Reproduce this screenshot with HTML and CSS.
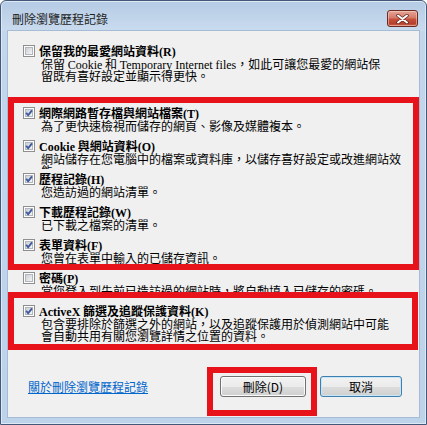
FILE: index.html
```html
<!DOCTYPE html>
<html lang="zh-Hant">
<head>
    <meta charset="UTF-8">
    <meta name="viewport" content="width=device-width, initial-scale=1.0">
    <title>刪除瀏覽歷程記錄</title>
    <link rel="stylesheet" href="styles.css">
</head>
<body>
    <!-- shared checkbox drawings -->
    <svg class="sprite" width="0" height="0" aria-hidden="true">
        <defs>
            <linearGradient id="boxFill" x1="0" y1="0" x2="1" y2="1">
                <stop offset="0" stop-color="#c9cdd3"/>
                <stop offset="1" stop-color="#f7f7f7"/>
            </linearGradient>
            <symbol id="boxOff" viewBox="0 0 12 12">
                <rect x="0.5" y="0.5" width="11" height="11" fill="#fdfdfd" stroke="#8f8f8f"/>
                <rect x="2.5" y="2.5" width="7" height="7" fill="url(#boxFill)" stroke="#b2b7bd"/>
            </symbol>
            <symbol id="boxOn" viewBox="0 0 12 12">
                <rect x="0.5" y="0.5" width="11" height="11" fill="#fdfdfd" stroke="#8f8f8f"/>
                <rect x="2.5" y="2.5" width="7" height="7" fill="url(#boxFill)" stroke="#b2b7bd"/>
                <path d="M3.2 5.8 L5.1 8.3 L9 3.3" fill="none" stroke="#3f5a9c" stroke-width="1.9"/>
            </symbol>
        </defs>
    </svg>

    <div class="window">
        <div class="titlebar">
            <span class="title">刪除瀏覽歷程記錄</span>
            <span class="close">
                <svg width="13" height="10" viewBox="0 0 13 10">
                    <path d="M2 1.5 L11 8.5 M11 1.5 L2 8.5" stroke="#5a2219" stroke-width="3.4" stroke-linecap="round"/>
                    <path d="M2 1.5 L11 8.5 M11 1.5 L2 8.5" stroke="#ffffff" stroke-width="2" stroke-linecap="round"/>
                </svg>
            </span>
        </div>

        <div class="client">
            <div class="item first">
                <svg class="box"><use href="#boxOff"/></svg>
                <div class="text">
                    <div class="label">保留我的最愛網站資料<span class="en">(R)</span></div>
                    <div class="desc">保留 <span class="en">Cookie</span> 和 <span class="en">Temporary Internet files</span>，如此可讓您最愛的網站保<br>留既有喜好設定並顯示得更快。</div>
                </div>
            </div>

            <div class="item row">
                <svg class="box"><use href="#boxOn"/></svg>
                <div class="text">
                    <div class="label">網際網路暫存檔與網站檔案<span class="en">(T)</span></div>
                    <div class="desc">為了更快速檢視而儲存的網頁、影像及媒體複本。</div>
                </div>
            </div>

            <div class="item row">
                <svg class="box"><use href="#boxOn"/></svg>
                <div class="text">
                    <div class="label"><span class="en">Cookie</span> 與網站資料<span class="en">(O)</span></div>
                    <div class="desc cut">網站儲存在您電腦中的檔案或資料庫，以儲存喜好設定或改進網站效<br>能。</div>
                </div>
            </div>

            <div class="item row">
                <svg class="box"><use href="#boxOn"/></svg>
                <div class="text">
                    <div class="label">歷程記錄<span class="en">(H)</span></div>
                    <div class="desc">您造訪過的網站清單。</div>
                </div>
            </div>

            <div class="item row">
                <svg class="box"><use href="#boxOn"/></svg>
                <div class="text">
                    <div class="label">下載歷程記錄<span class="en">(W)</span></div>
                    <div class="desc">已下載之檔案的清單。</div>
                </div>
            </div>

            <div class="item row">
                <svg class="box"><use href="#boxOn"/></svg>
                <div class="text">
                    <div class="label">表單資料<span class="en">(F)</span></div>
                    <div class="desc">您曾在表單中輸入的已儲存資訊。</div>
                </div>
            </div>

            <div class="item row">
                <svg class="box"><use href="#boxOff"/></svg>
                <div class="text">
                    <div class="label">密碼<span class="en">(P)</span></div>
                    <div class="desc">當您登入到先前已造訪過的網站時，將自動填入已儲存的密碼。</div>
                </div>
            </div>

            <div class="item last">
                <svg class="box"><use href="#boxOn"/></svg>
                <div class="text">
                    <div class="label"><span class="en">ActiveX</span> 篩選及追蹤保護資料<span class="en">(K)</span></div>
                    <div class="desc">包含要排除於篩選之外的網站，以及追蹤保護用於偵測網站中可能<br>會自動共用有關您瀏覽詳情之位置的資料。</div>
                </div>
            </div>

            <div class="footer">
                <a class="about" href="#">關於刪除瀏覽歷程記錄</a>
                <div class="buttons">
                    <button class="btn">刪除(D)</button>
                    <button class="btn default">取消</button>
                </div>
            </div>

            <!-- red annotation frames drawn over the dialog -->
            <div class="mark mark-items"></div>
            <div class="mark mark-activex"></div>
            <div class="mark mark-delete"></div>
        </div>
    </div>
</body>
</html>
```

FILE: styles.css
```css
body {
    margin: 0;
    background-color: #ffffff;
    font-family: "Noto Sans CJK TC", sans-serif;
}

.sprite {
    position: absolute;
    width: 0;
    height: 0;
}

.window {
    width: 427px;
    height: 425px;
    box-sizing: border-box;
    border: 1px solid #44597a;
    border-radius: 6px 6px 0 0;
    background: linear-gradient(#b5cbe4 0, #c9dbee 30px, #c2d6ec 30px, #bdd3ea 100%);
    box-shadow: inset 0 0 0 1px #dfe9f5;
}

.titlebar {
    height: 30px;
    box-sizing: border-box;
    display: flex;
    justify-content: space-between;
    align-items: flex-start;
    padding: 9px 8px 0 11px;
}

.title {
    margin-top: 1px;
    font-size: 12px;
    line-height: 15px;
    color: #1e1e1e;
}

.close {
    width: 31px;
    height: 17px;
    box-sizing: border-box;
    display: flex;
    align-items: center;
    justify-content: center;
    border: 1px solid #6b2b22;
    border-radius: 3px;
    background: linear-gradient(#e5a598 0, #d67a69 45%, #c44f3b 55%, #b8412d 85%, #cf6a52 100%);
    box-shadow: inset 0 0 0 1px rgba(255, 220, 210, 0.5);
}

.client {
    position: relative;
    height: 386px;
    margin: 0 7px;
    padding-top: 12px;
    box-sizing: border-box;
    background-color: #f0f0f0;
    box-shadow: 0 0 0 1px #a6bbd4;
}

.item {
    display: flex;
    align-items: flex-start;
    padding-left: 15px;
    margin-bottom: 6px;
}

.item.first {
    margin-bottom: 23px;
}

.item.row {
    height: 27px;
}

.box {
    width: 12px;
    height: 12px;
    margin-top: 2px;
    flex: none;
}

.text {
    margin-left: 4px;
    color: #000000;
}

.label {
    font-size: 12px;
    font-weight: bold;
    line-height: 15px;
    white-space: nowrap;
}

.desc {
    margin-left: 2px;
    font-size: 12px;
    line-height: 12px;
    white-space: nowrap;
}

.desc.cut {
    height: 16px;
    overflow: hidden;
}

.en {
    font-family: "Liberation Serif", serif;
    line-height: 0;
}

.footer {
    display: flex;
    justify-content: space-between;
    align-items: center;
    margin-top: 34px;
    padding: 0 17px 0 20px;
}

.about {
    font-size: 12px;
    line-height: 14px;
    color: #0066cc;
    text-decoration: underline;
}

.buttons {
    display: flex;
    gap: 14px;
}

.btn {
    width: 86px;
    height: 21px;
    padding: 0;
    border: 1px solid #707070;
    border-radius: 3px;
    background: linear-gradient(#f2f2f2 0, #ebebeb 50%, #dddddd 50%, #cfcfcf 100%);
    box-shadow: inset 0 0 0 1px #fbfbfb;
    font-family: "Noto Sans CJK TC", sans-serif;
    font-size: 12px;
    line-height: 19px;
    color: #000000;
}

.btn.default {
    width: 82px;
    border-color: #3c7fb1;
    box-shadow: inset 0 0 0 1px #c9e6f6;
}

.mark {
    position: absolute;
    box-sizing: border-box;
    border: 6px solid #e8121b;
    pointer-events: none;
}

.mark-items {
    left: 0;
    top: 66px;
    width: 411px;
    height: 173px;
}

.mark-activex {
    left: 0;
    top: 261px;
    width: 410px;
    height: 58px;
}

.mark-delete {
    left: 199px;
    top: 336px;
    width: 110px;
    height: 49px;
}
```
